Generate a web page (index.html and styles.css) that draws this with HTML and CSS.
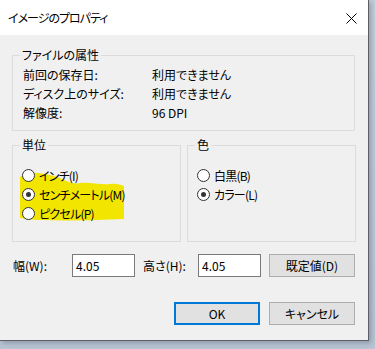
FILE: index.html
```html
<!DOCTYPE html>
<html lang="ja">
<head>
<meta charset="utf-8">
<title>イメージのプロパティ</title>
<link rel="stylesheet" href="styles.css">
</head>
<body>
<div class="window">
  <div class="titlebar">
    <span class="title">イメージのプロパティ</span>
    <svg class="close" width="11" height="11" viewBox="0 0 11 11"><path d="M0.5 0.5 L10.5 10.5 M10.5 0.5 L0.5 10.5" stroke="#000" stroke-width="1" fill="none"/></svg>
  </div>
  <div class="content">
    <fieldset class="group attrs">
      <legend>ファイルの属性</legend>
      <div class="attr-grid">
        <span>前回の保存日:</span><span>利用できません</span>
        <span>ディスク上のサイズ:</span><span>利用できません</span>
        <span>解像度:</span><span>96 DPI</span>
      </div>
    </fieldset>
    <div class="pair">
      <fieldset class="group options unit">
        <legend>単位</legend>
        <svg class="marker" width="106" height="50" viewBox="0 0 106 50"><path d="M0 6 C4 2 10 1 18 2 C28 3 36 5 44 9 C50 12 56 13 60 12 C70 11 80 14 90 13 C96 12 101 14 104 15 L104 48 C80 49 50 50 22 49 C12 49 4 48 0 47 Z" fill="#f2e600"/></svg>
        <div class="radio-list">
          <label class="radio"><span class="dot"></span>インチ(I)</label>
          <label class="radio"><span class="dot on"></span>センチメートル(M)</label>
          <label class="radio"><span class="dot"></span>ピクセル(P)</label>
        </div>
      </fieldset>
      <fieldset class="group options">
        <legend>色</legend>
        <div class="radio-list">
          <label class="radio"><span class="dot"></span>白黒(B)</label>
          <label class="radio"><span class="dot on"></span>カラー(L)</label>
        </div>
      </fieldset>
    </div>
    <div class="size-row">
      <span class="lbl-w">幅(W):</span>
      <span class="textbox">4.05</span>
      <span class="lbl-h">高さ(H):</span>
      <span class="textbox">4.05</span>
      <span class="btn">既定値(D)</span>
    </div>
    <div class="actions">
      <span class="btn primary">OK</span>
      <span class="btn">キャンセル</span>
    </div>
  </div>
</div>
</body>
</html>
```
FILE: styles.css
```css
html, body {
  margin: 0;
  padding: 0;
}
body {
  width: 375px;
  height: 349px;
  background: linear-gradient(180deg, #c3ccd9 0%, #b8c3d3 100%);
  font-family: "Noto Sans CJK JP", "Noto Sans", sans-serif;
  font-size: 12px;
  color: #000;
  font-feature-settings: "palt";
  overflow: hidden;
}
.window {
  width: 368px;
  height: 340px;
  background: #f0f0f0;
  border-right: 1px solid #5c5f66;
  border-bottom: 1px solid #5c5f66;
  box-shadow: 2px 2px 5px rgba(60, 70, 90, 0.35);
  display: flex;
  flex-direction: column;
}
.titlebar {
  height: 35px;
  background: #fff;
  display: flex;
  align-items: center;
  justify-content: space-between;
  padding: 0 11px 0 8px;
  flex: none;
}
.title {
  font-size: 12px;
  line-height: 16px;
  letter-spacing: -1px;
}
.close {
  display: block;
  margin-top: 1px;
}
.content {
  padding: 12px 13px 0 12px;
  display: flex;
  flex-direction: column;
}
.group {
  margin: 0;
  border: 1px solid #dcdcdc;
  padding: 0;
  min-width: 0;
}
.group legend {
  margin-left: 7px;
  padding: 0 2px;
  line-height: 16px;
  color: #000;
}
.attrs {
  height: 84px;
  box-sizing: border-box;
}
.attr-grid {
  display: grid;
  grid-template-columns: 129px 1fr;
  grid-auto-rows: 19px;
  align-items: center;
  padding: 2px 0 0 10px;
}
.pair {
  margin-top: 6px;
  display: grid;
  grid-template-columns: 169px 169px;
  column-gap: 6px;
}
.options {
  height: 105px;
  box-sizing: border-box;
  position: relative;
}
.marker {
  position: absolute;
  left: 7px;
  top: 18px;
}
.radio-list {
  position: relative;
  display: flex;
  flex-direction: column;
  padding: 13px 0 0 9px;
}
.radio {
  display: flex;
  align-items: center;
  height: 19px;
  gap: 4px;
  letter-spacing: -0.8px;
}
.dot {
  width: 11px;
  height: 11px;
  border: 1px solid #333;
  border-radius: 50%;
  background: #fff;
  display: flex;
  align-items: center;
  justify-content: center;
  flex: none;
}
.dot.on::after {
  content: "";
  width: 5px;
  height: 5px;
  border-radius: 50%;
  background: #333;
}
.size-row {
  margin-top: 11px;
  display: flex;
  align-items: center;
  height: 24px;
  padding-left: 1px;
}
.lbl-w {
  width: 59px;
}
.lbl-h {
  width: 55px;
  margin-left: 8px;
}
.textbox {
  box-sizing: border-box;
  width: 63px;
  height: 23px;
  border: 1px solid #7a7a7a;
  background: #fff;
  padding-left: 3px;
  display: flex;
  align-items: center;
}
.btn {
  box-sizing: border-box;
  width: 86px;
  height: 23px;
  background: #e1e1e1;
  border: 1px solid #adadad;
  display: flex;
  align-items: center;
  justify-content: center;
}
.size-row .btn {
  margin-left: 8px;
}
.actions {
  margin-top: 25px;
  display: flex;
  justify-content: flex-end;
  gap: 9px;
}
.btn.primary {
  border: 2px solid #0078d7;
}
```
